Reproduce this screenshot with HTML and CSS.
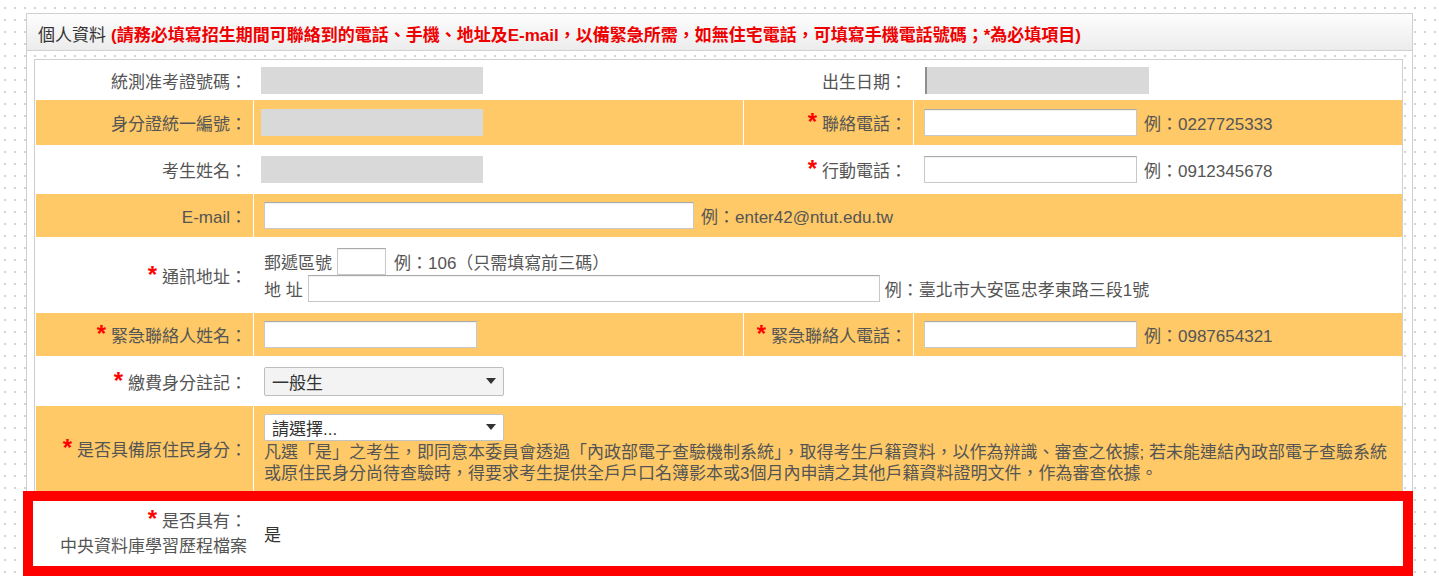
FILE: index.html
```html
<!DOCTYPE html>
<html lang="zh-TW">
<head>
    <meta charset="UTF-8">
    <title>個人資料</title>
    <link rel="stylesheet" href="styles.css">
</head>
<body>
    <div class="page">
        <div class="panel">
            <div class="panel-head">個人資料 <span class="notice">(請務必填寫招生期間可聯絡到的電話、手機、地址及E-mail，以備緊急所需，如無住宅電話，可填寫手機電話號碼；*為必填項目)</span></div>

            <div class="panel-body">
                <table class="form-table">
                    <colgroup>
                        <col class="c-lbl1">
                        <col class="c-val1">
                        <col class="c-lbl2">
                        <col>
                    </colgroup>
                    <tr class="r1">
                        <td class="lbl">統測准考證號碼：</td>
                        <td><div class="mask"></div></td>
                        <td class="lbl">出生日期：</td>
                        <td><div class="mask mask-birth"></div></td>
                    </tr>
                    <tr class="r2 alt">
                        <td class="lbl">身分證統一編號：</td>
                        <td><div class="mask"></div></td>
                        <td class="lbl"><span class="req">*</span>聯絡電話：</td>
                        <td>
                            <div class="field">
                                <input type="text" class="w213">
                                <span class="ex">例：0227725333</span>
                            </div>
                        </td>
                    </tr>
                    <tr class="r3">
                        <td class="lbl">考生姓名：</td>
                        <td><div class="mask"></div></td>
                        <td class="lbl"><span class="req">*</span>行動電話：</td>
                        <td>
                            <div class="field">
                                <input type="text" class="w213">
                                <span class="ex">例：0912345678</span>
                            </div>
                        </td>
                    </tr>
                    <tr class="r4 alt">
                        <td class="lbl">E-mail：</td>
                        <td colspan="3">
                            <div class="field">
                                <input type="text" class="w430">
                                <span class="ex">例：enter42@ntut.edu.tw</span>
                            </div>
                        </td>
                    </tr>
                    <tr class="r5">
                        <td class="lbl"><span class="req">*</span>通訊地址：</td>
                        <td colspan="3">
                            <div class="line">
                                <span>郵遞區號</span>
                                <input type="text" class="w49">
                                <span class="ex ex-zip">例：106（只需填寫前三碼）</span>
                            </div>
                            <div class="line">
                                <span>地 址</span>
                                <input type="text" class="w572">
                                <span class="ex">例：臺北市大安區忠孝東路三段1號</span>
                            </div>
                        </td>
                    </tr>
                    <tr class="r6 alt">
                        <td class="lbl"><span class="req">*</span>緊急聯絡人姓名：</td>
                        <td><input type="text" class="w213"></td>
                        <td class="lbl"><span class="req">*</span>緊急聯絡人電話：</td>
                        <td>
                            <div class="field">
                                <input type="text" class="w213">
                                <span class="ex">例：0987654321</span>
                            </div>
                        </td>
                    </tr>
                    <tr class="r7">
                        <td class="lbl"><span class="req">*</span>繳費身分註記：</td>
                        <td colspan="3">
                            <div class="select select-gray">
                                <span>一般生</span>
                                <svg width="10" height="6" viewBox="0 0 10 6"><path d="M0 0h10L5 6z" fill="#333"/></svg>
                            </div>
                        </td>
                    </tr>
                    <tr class="r8 alt">
                        <td class="lbl"><span class="req">*</span>是否具備原住民身分：</td>
                        <td colspan="3">
                            <div class="select">
                                <span>請選擇...</span>
                                <svg width="10" height="6" viewBox="0 0 10 6"><path d="M0 0h10L5 6z" fill="#333"/></svg>
                            </div>
                            <div class="note">
                                <div>凡選「是」之考生，即同意本委員會透過「內政部電子查驗機制系統」，取得考生戶籍資料，以作為辨識、審查之依據; 若未能連結內政部電子查驗系統</div>
                                <div>或原住民身分尚待查驗時，得要求考生提供全戶戶口名簿影本或3個月內申請之其他戶籍資料證明文件，作為審查依據。</div>
                            </div>
                        </td>
                    </tr>
                </table>

                <!-- marked row -->
                <div class="highlight">
                    <div class="hl-label">
                        <div><span class="req">*</span>是否具有：</div>
                        <div>中央資料庫學習歷程檔案</div>
                    </div>
                    <div class="hl-value">是</div>
                </div>
            </div>
        </div>
    </div>
</body>
</html>
```

FILE: styles.css
```css
* {
    box-sizing: border-box;
}

body {
    margin: 0;
    font-family: "Liberation Sans", "Noto Sans CJK TC", sans-serif;
    font-size: 17px;
    color: #555;
    background-color: #fff;
    background-image: radial-gradient(circle, #d4d4d4 0.9px, transparent 1.3px);
    background-size: 10px 12px;
    background-position: 0 2px;
}

.page {
    padding: 13px 26px 0 26px;
}

.panel {
    border: 1px solid #d0d0d0;
    border-bottom: none;
}

.panel-head {
    height: 37px;
    padding: 2px 11px 0;
    display: flex;
    align-items: center;
    white-space: nowrap;
    color: #333;
    background: linear-gradient(#fdfdfd, #ececec);
    border-bottom: 1px solid #d0d0d0;
}

.notice {
    margin-left: 5px;
    color: #ee0000;
    font-weight: bold;
}

.panel-body {
    padding: 8px 9px 0 7px;
}

.form-table {
    width: 100%;
    table-layout: fixed;
    border-collapse: separate;
    border-spacing: 0;
    border: 1px solid #cfcfcf;
    background: #fff;
}

.c-lbl1 { width: 219px; }
.c-val1 { width: 489px; }
.c-lbl2 { width: 171px; }

.form-table td {
    padding: 0 10px;
    vertical-align: middle;
}

.form-table td.lbl {
    text-align: right;
    padding: 0 6px 0 4px;
    white-space: nowrap;
    border-left: 1px solid #fff;
    border-right: 1px solid #fff;
}

.form-table tr.alt td {
    background: #fec966;
}

.r1 { height: 40px; }
.r2 { height: 45px; }
.r3 { height: 49px; }
.r4 { height: 43px; }
.r5 { height: 76px; }
.r6 { height: 43px; }
.r7 { height: 50px; }
.r8 { height: 85px; }

.req {
    color: #f00;
    font-family: "Liberation Sans", sans-serif;
    font-weight: bold;
    font-size: 24px;
    line-height: 0;
    margin-right: 5px;
}

.mask {
    width: 222px;
    height: 27px;
    margin-left: -3px;
    background: #d9d9d9;
}

.mask-birth {
    margin-left: 1px;
    border-left: 2px solid #8f8f8f;
    width: 224px;
}

input {
    font: inherit;
    height: 27px;
    padding: 0 4px;
    margin: 0;
    border: 1px solid #c8c8c8;
    border-top-color: #a9a9a9;
    background: #fff;
    box-shadow: inset 0 1px 1px rgba(0,0,0,0.06);
}

.w49 { width: 49px; }
.w213 { width: 213px; }
.w430 { width: 430px; }
.w572 { width: 572px; }

.field {
    display: flex;
    align-items: center;
    gap: 7px;
    white-space: nowrap;
}

.ex {
    color: #555;
    white-space: nowrap;
}

.line {
    display: flex;
    align-items: center;
    gap: 5px;
    height: 27px;
    white-space: nowrap;
}

.ex-zip {
    margin-left: 3px;
}

.select {
    width: 240px;
    height: 27px;
    display: flex;
    align-items: center;
    justify-content: space-between;
    padding: 0 7px 0 7px;
    color: #333;
    background: #fff;
    border: 1px solid #c4c4c4;
    border-radius: 2px;
}

.select-gray {
    height: 29px;
    background: #f3f3f3;
    border-color: #bdbdbd;
}

.note {
    margin-top: 1px;
    line-height: 21px;
    white-space: nowrap;
    color: #555;
}

.highlight {
    display: flex;
    height: 85px;
    margin: -1px -10px 0 -11px;
    border: 10px solid #ff0000;
    background: #fff;
}

.hl-label {
    width: 220px;
    padding-right: 6px;
    display: flex;
    flex-direction: column;
    justify-content: center;
    text-align: right;
    line-height: 25px;
    white-space: nowrap;
}

.hl-value {
    display: flex;
    align-items: center;
    padding-left: 11px;
    color: #333;
}
```
